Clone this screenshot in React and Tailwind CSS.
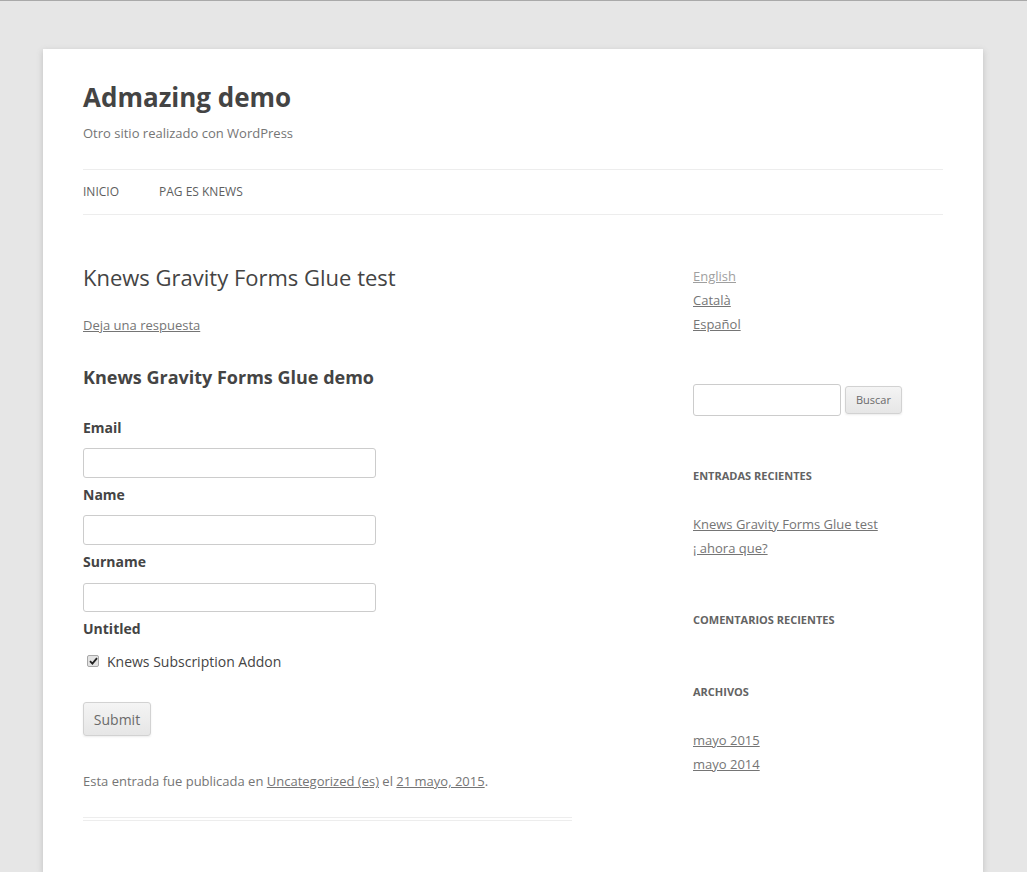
export default function App() {
  const font = { fontFamily: '"Open Sans", "Noto Sans", sans-serif' };
  return (
    <div className="min-h-[872px] bg-[#e6e6e6] text-[#444]" style={font}>
      <div className="h-px bg-[#a9a9a9]" />
      <div className="ml-[43px] mt-[48px] w-[940px] min-h-[823px] bg-white px-[40px] shadow-[0_2px_6px_rgba(100,100,100,0.3)]">
        <header className="pt-[24px]">
          <h1 className="text-[26px] font-bold leading-[48px] text-[#444]">Admazing demo</h1>
          <p className="text-[13px] leading-[24px] text-[#757575]">Otro sitio realizado con WordPress</p>
          <nav className="mt-[24px] flex h-[46px] items-center gap-[40px] border-y border-[#ededed] text-[12px] uppercase text-[#5e5e5e]">
            <span>Inicio</span>
            <span>Pag es Knews</span>
          </nav>
        </header>
        <div className="flex">
          <main className="w-[489px] pt-[46px]">
            <h2 className="text-[22px] leading-[32px] font-normal text-[#444]">Knews Gravity Forms Glue test</h2>
            <p className="mt-[20px] text-[13px] leading-[24px] text-[#757575] underline">Deja una respuesta</p>
            <h3 className="mt-[28px] text-[18px] font-bold leading-[24px] text-[#444]">Knews Gravity Forms Glue demo</h3>
            <div className="mt-[27px] text-[14px]">
              <label className="block font-bold leading-[24px]">Email</label>
              <div className="mt-[8px] h-[30px] w-[293px] rounded-[3px] border border-[#ccc] bg-white" />
              <label className="mt-[5px] block font-bold leading-[24px]">Name</label>
              <div className="mt-[8px] h-[30px] w-[293px] rounded-[3px] border border-[#ccc] bg-white" />
              <label className="mt-[5px] block font-bold leading-[24px]">Surname</label>
              <div className="mt-[9px] h-[29px] w-[293px] rounded-[3px] border border-[#ccc] bg-white" />
              <label className="mt-[5px] block font-bold leading-[24px]">Untitled</label>
              <div className="mt-[8px] flex h-[24px] items-center">
                <span className="ml-[4px] flex h-[12px] w-[12px] items-center justify-center rounded-[2px] border border-[#a8a8a8] bg-[#e3e3e3]">
                  <svg width="9" height="8" viewBox="0 0 9 8">
                    <path d="M1 4.2 L3.4 6.6 L8 1.2" fill="none" stroke="#222" strokeWidth="1.8" />
                  </svg>
                </span>
                <span className="ml-[8px] text-[14px] text-[#444]">Knews Subscription Addon</span>
              </div>
              <button className="mt-[29px] flex h-[34px] w-[68px] items-center justify-center rounded-[3px] border border-[#d2d2d2] bg-gradient-to-b from-[#f4f4f4] to-[#e6e6e6] text-[14px] text-[#6a6a6a] shadow-[0_1px_2px_rgba(64,64,64,0.1)]">
                Submit
              </button>
            </div>
            <p className="mt-[33px] text-[13px] leading-[24px] text-[#757575]">
              Esta entrada fue publicada en <span className="underline">Uncategorized (es)</span> el{" "}
              <span className="underline">21 mayo, 2015</span>.
            </p>
            <div className="mt-[24px] h-[4px] border-y border-[#ededed]" />
          </main>
          <aside className="ml-auto w-[250px] pt-[49px] text-[13px] text-[#757575]">
            <ul className="leading-[24px]">
              <li><span className="underline text-[#9f9f9f]">English</span></li>
              <li><span className="underline">Català</span></li>
              <li><span className="underline">Español</span></li>
            </ul>
            <div className="mt-[48px] flex items-center">
              <div className="h-[32px] w-[148px] rounded-[3px] border border-[#ccc] bg-white" />
              <button className="ml-[4px] flex h-[28px] w-[57px] items-center justify-center rounded-[3px] border border-[#d2d2d2] bg-gradient-to-b from-[#f4f4f4] to-[#e6e6e6] text-[11px] text-[#6a6a6a] shadow-[0_1px_2px_rgba(64,64,64,0.1)]">
                Buscar
              </button>
            </div>
            <h4 className="mt-[52px] text-[11px] font-bold uppercase leading-[16px] text-[#636363]">Entradas recientes</h4>
            <ul className="mt-[28px] leading-[24px]">
              <li><span className="underline">Knews Gravity Forms Glue test</span></li>
              <li><span className="underline">¡ ahora que?</span></li>
            </ul>
            <h4 className="mt-[52px] text-[11px] font-bold uppercase leading-[16px] text-[#636363]">Comentarios recientes</h4>
            <h4 className="mt-[56px] text-[11px] font-bold uppercase leading-[16px] text-[#636363]">Archivos</h4>
            <ul className="mt-[28px] leading-[24px]">
              <li><span className="underline">mayo 2015</span></li>
              <li><span className="underline">mayo 2014</span></li>
            </ul>
          </aside>
        </div>
      </div>
    </div>
  );
}
